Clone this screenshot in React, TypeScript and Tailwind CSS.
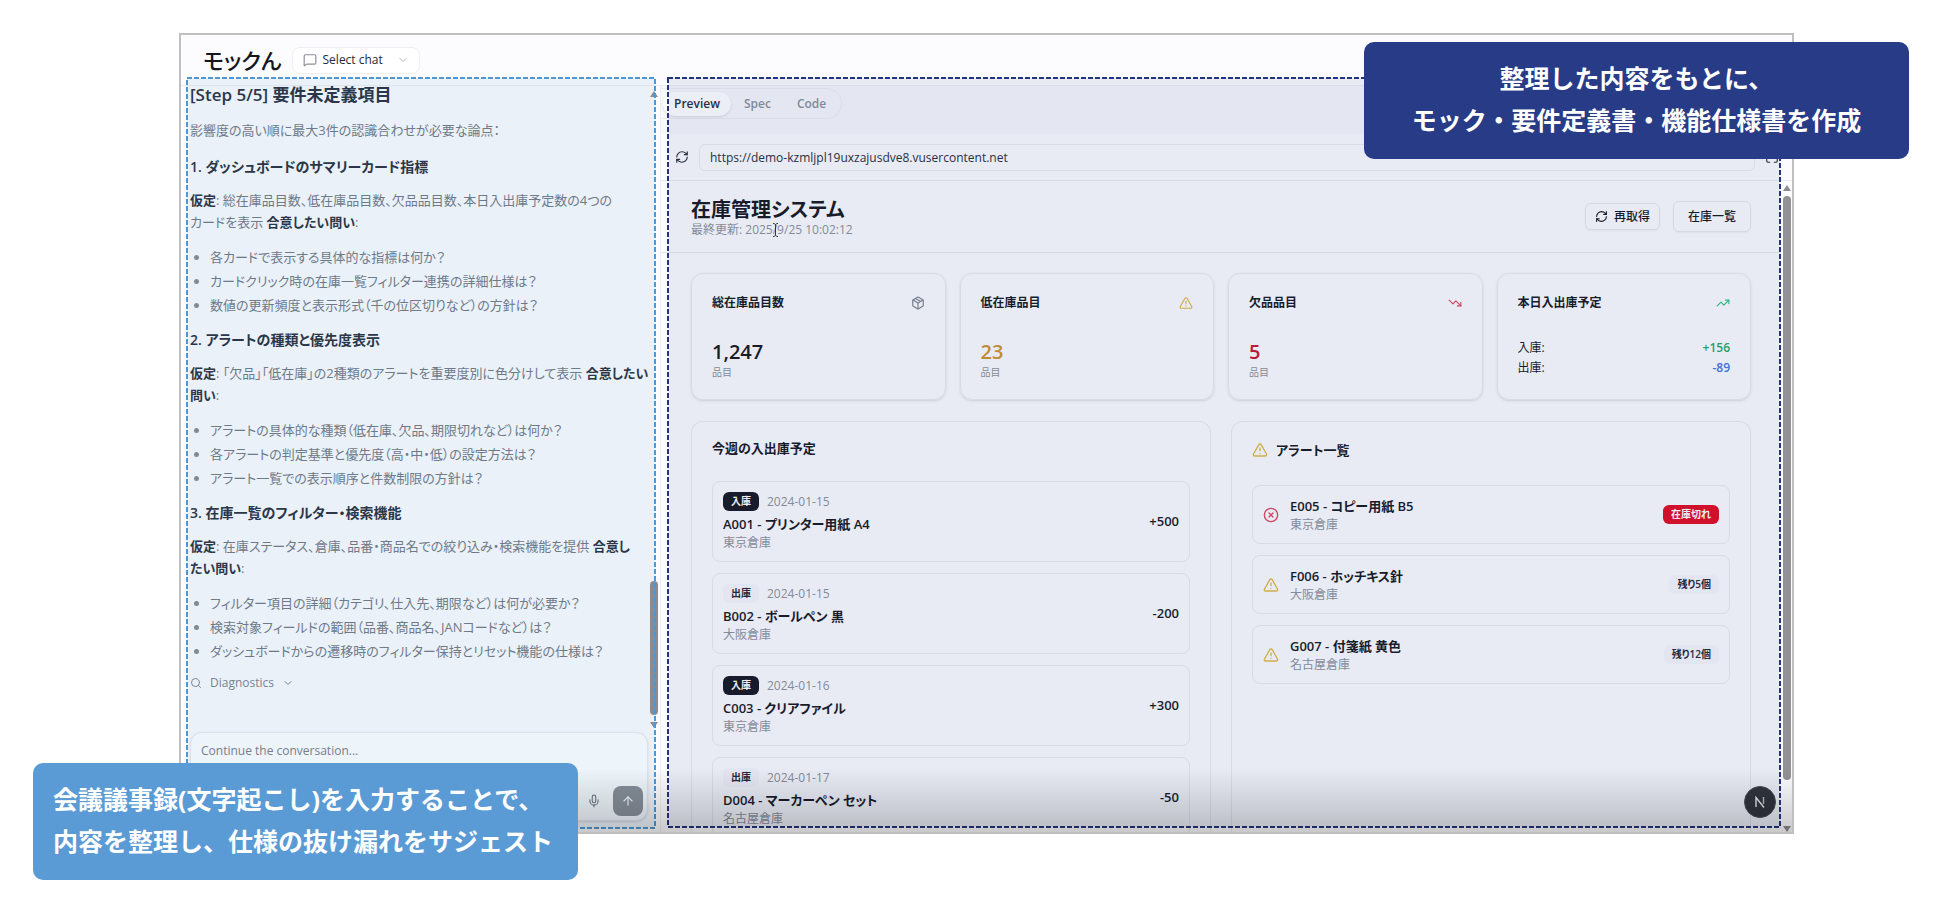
import React, { useState } from 'react';
import {
  ArrowUp,
  ChevronDown,
  CircleX,
  Maximize,
  MessageSquare,
  Mic,
  Package,
  RefreshCw,
  Search,
  TrendingDown,
  TrendingUp,
  TriangleAlert,
} from 'lucide-react';

interface Topic {
  title: string;
  assumption: React.ReactNode;
  agree: React.ReactNode;
  questions: string[];
}

const topics: Topic[] = [
  {
    title: '1. ダッシュボードのサマリーカード指標',
    assumption: (
      <>
        総在庫品目数、低在庫品目数、欠品品目数、本日入出庫予定数の4つの
        <br />
        カードを表示
      </>
    ),
    agree: '合意したい問い',
    questions: [
      '各カードで表示する具体的な指標は何か？',
      'カードクリック時の在庫一覧フィルター連携の詳細仕様は？',
      '数値の更新頻度と表示形式（千の位区切りなど）の方針は？',
    ],
  },
  {
    title: '2. アラートの種類と優先度表示',
    assumption: '「欠品」「低在庫」の2種類のアラートを重要度別に色分けして表示',
    agree: (
      <>
        合意したい
        <br />
        問い
      </>
    ),
    questions: [
      'アラートの具体的な種類（低在庫、欠品、期限切れなど）は何か？',
      '各アラートの判定基準と優先度（高・中・低）の設定方法は？',
      'アラート一覧での表示順序と件数制限の方針は？',
    ],
  },
  {
    title: '3. 在庫一覧のフィルター・検索機能',
    assumption: '在庫ステータス、倉庫、品番・商品名での絞り込み・検索機能を提供',
    agree: (
      <>
        合意し
        <br />
        たい問い
      </>
    ),
    questions: [
      'フィルター項目の詳細（カテゴリ、仕入先、期限など）は何が必要か？',
      '検索対象フィールドの範囲（品番、商品名、JANコードなど）は？',
      'ダッシュボードからの遷移時のフィルター保持とリセット機能の仕様は？',
    ],
  },
];

const schedule = [
  { type: '入庫', date: '2024-01-15', name: 'A001 - プリンター用紙 A4', warehouse: '東京倉庫', qty: '+500' },
  { type: '出庫', date: '2024-01-15', name: 'B002 - ボールペン 黒', warehouse: '大阪倉庫', qty: '-200' },
  { type: '入庫', date: '2024-01-16', name: 'C003 - クリアファイル', warehouse: '東京倉庫', qty: '+300' },
  { type: '出庫', date: '2024-01-17', name: 'D004 - マーカーペン セット', warehouse: '名古屋倉庫', qty: '-50' },
];

const alerts = [
  { name: 'E005 - コピー用紙 B5', warehouse: '東京倉庫', status: '在庫切れ', out: true },
  { name: 'F006 - ホッチキス針', warehouse: '大阪倉庫', status: '残り5個', out: false },
  { name: 'G007 - 付箋紙 黄色', warehouse: '名古屋倉庫', status: '残り12個', out: false },
];

const tabs = ['Preview', 'Spec', 'Code'];

// Tinted area with a dashed outline that marks one half of the window
const Highlight: React.FC<{ className: string; stroke: string }> = ({ className, stroke }) => (
  <div className={`absolute pointer-events-none ${className}`}>
    <svg className="w-full h-full overflow-visible" aria-hidden="true">
      <rect width="100%" height="100%" fill="none" stroke={stroke} strokeWidth="2" strokeDasharray="5 2" />
    </svg>
  </div>
);

const Triangle: React.FC<{ down?: boolean }> = ({ down }) => (
  <svg viewBox="0 0 8 6" className="w-2 h-[6px] fill-[#8c8c8f]" aria-hidden="true">
    <path d={down ? 'M0 0h8L4 6z' : 'M0 6h8L4 0z'} />
  </svg>
);

const Badge: React.FC<{ className: string; children: React.ReactNode }> = ({ className, children }) => (
  <span className={`flex items-center h-[19px] px-2 rounded-md text-[10px] font-semibold ${className}`}>
    {children}
  </span>
);

const SummaryCard: React.FC<{ title: string; icon: React.ReactNode; children: React.ReactNode }> = ({
  title,
  icon,
  children,
}) => (
  <div className="border border-[#e9eaef] rounded-xl shadow-sm px-5 pt-[21px] pb-[19px]">
    <div className="flex items-center justify-between mb-[29px]">
      <h3 className="text-xs font-semibold">{title}</h3>
      {icon}
    </div>
    {children}
  </div>
);

const ChatPanel: React.FC = () => (
  <section className="relative w-[480px] shrink-0 flex flex-col pl-[9px] border-r border-[#efeff3]">
    <div className="flex-1 min-h-0 text-[13px] leading-[22px] text-[#71767f] whitespace-nowrap">
      <h2 className="text-[17px] leading-[18px] font-semibold text-[#262b38]">[Step 5/5] 要件未定義項目</h2>
      <p className="mt-[15px] mb-[14px]">影響度の高い順に最大3件の認識合わせが必要な論点：</p>
      {topics.map((topic) => (
        <div key={topic.title} className="mb-3">
          <h3 className="text-sm leading-6 font-semibold text-[#262b38]">{topic.title}</h3>
          <p className="mt-[10px] mb-[13px]">
            <strong className="font-semibold text-[#262b38]">仮定</strong>: {topic.assumption}{' '}
            <strong className="font-semibold text-[#262b38]">{topic.agree}</strong>:
          </p>
          <ul className="flex flex-col gap-[2px]">
            {topic.questions.map((q) => (
              <li key={q} className="flex items-center">
                <span className="w-[5px] h-[5px] ml-1 mr-[11px] rounded-full bg-[#858a93]" />
                {q}
              </li>
            ))}
          </ul>
        </div>
      ))}
      <button className="flex items-center gap-2 mt-[13px] text-xs text-[#7d828b]">
        <Search className="w-3 h-3" />
        Diagnostics
        <ChevronDown className="w-3 h-3" />
      </button>
    </div>

    <form className="h-[89px] mr-3 mb-[11px] border border-[#ebebf0] rounded-xl bg-white shadow-sm flex flex-col">
      <textarea
        aria-label="Message"
        placeholder="Continue the conversation..."
        className="flex-1 w-full resize-none outline-none px-[10px] pt-[10px] text-xs placeholder:text-[#777c86]"
      />
      <div className="flex items-center justify-end gap-3 pr-1 pb-1">
        <button type="button" aria-label="Voice input">
          <Mic className="w-[14px] h-[14px] text-[#777b82]" />
        </button>
        <button
          type="button"
          aria-label="Send"
          className="w-[30px] h-[30px] rounded-lg bg-[#8b8d92] text-white flex items-center justify-center"
        >
          <ArrowUp className="w-[14px] h-[14px]" />
        </button>
      </div>
    </form>

    <div className="absolute right-[2px] top-[5px] bottom-[104px] w-2 flex flex-col items-center">
      <Triangle />
      <div className="flex-1" />
      <div className="w-2 h-[134px] mb-[7px] rounded-full bg-[#8c8c8f]" />
      <Triangle down />
    </div>
    <Highlight className="left-[6px] right-[5px] -top-2 bottom-1 bg-[#5b9bd5]/11" stroke="#4f97d3" />
  </section>
);

const Dashboard: React.FC = () => (
  <div className="flex-1 min-w-0 flex flex-col text-[#15161c]">
    <header className="relative flex items-center justify-between h-[72px] shrink-0 px-[30px] border-b border-[#e6e7ec]">
      <div className="pt-[2px]">
        <h1 className="text-xl leading-6 font-semibold">在庫管理システム</h1>
        <p className="text-xs text-[#8d9199]">最終更新: 2025/9/25 10:02:12</p>
      </div>
      <svg viewBox="0 0 7 14" className="absolute left-[111px] top-[42px] w-[7px] h-[14px]" aria-hidden="true">
        <path d="M1 .5c1.500 0 2.500.5 2.500 1.500C3.500 1 4.500.5 6 .5M3.500 2v10M1 13.500c1.500 0 2.500-.5 2.500-1.500 0 1 1 1.500 2.500 1.500" fill="none" stroke="#33363f" />
      </svg>
      <div className="flex items-center gap-[13px] text-xs font-medium">
        <button className="flex items-center gap-[6px] h-[27px] px-[9px] border border-[#e6e7ec] rounded-md shadow-xs">
          <RefreshCw className="w-[13px] h-[13px]" />
          再取得
        </button>
        <button className="h-[31px] px-[14px] border border-[#e6e7ec] rounded-md shadow-xs">在庫一覧</button>
      </div>
    </header>

    <div className="flex-1 min-h-0 overflow-hidden flex flex-col px-[30px] pt-5">
      <div className="grid grid-cols-4 gap-[14px] shrink-0">
        <SummaryCard title="総在庫品目数" icon={<Package className="w-[14px] h-[14px] text-[#7c8089]" />}>
          <p className="text-xl leading-6 font-semibold">1,247</p>
          <p className="text-[10px] leading-4 text-[#8d9199]">品目</p>
        </SummaryCard>
        <SummaryCard title="低在庫品目" icon={<TriangleAlert className="w-[14px] h-[14px] text-[#e0b840]" />}>
          <p className="text-xl leading-6 font-semibold text-[#d1912a]">23</p>
          <p className="text-[10px] leading-4 text-[#8d9199]">品目</p>
        </SummaryCard>
        <SummaryCard title="欠品品目" icon={<TrendingDown className="w-[14px] h-[14px] text-[#e0445c]" />}>
          <p className="text-xl leading-6 font-semibold text-[#cf1330]">5</p>
          <p className="text-[10px] leading-4 text-[#8d9199]">品目</p>
        </SummaryCard>
        <SummaryCard title="本日入出庫予定" icon={<TrendingUp className="w-[14px] h-[14px] text-[#2fc183]" />}>
          <dl className="-mt-[2px] text-xs leading-5">
            <div className="flex justify-between">
              <dt>入庫:</dt>
              <dd className="font-semibold text-[#1fa866]">+156</dd>
            </div>
            <div className="flex justify-between">
              <dt>出庫:</dt>
              <dd className="font-semibold text-[#3b74e0]">-89</dd>
            </div>
          </dl>
        </SummaryCard>
      </div>

      <div className="grid grid-cols-2 gap-5 mt-[21px] flex-1 min-h-0">
        <section className="border border-b-0 border-[#e9eaef] rounded-t-xl px-5 pt-[19px]">
          <h2 className="text-[13px] leading-[14px] font-semibold mb-[26px]">今週の入出庫予定</h2>
          <ul className="flex flex-col gap-[11px]">
            {schedule.map((item) => (
              <li
                key={item.name}
                className="flex items-center justify-between p-[10px] border border-[#e9eaef] rounded-lg"
              >
                <div>
                  <div className="flex items-center gap-2 mb-[3px]">
                    <Badge className={item.type === '入庫' ? 'bg-[#14151f] text-white' : 'bg-[#f7f7fb] text-[#1f2430]'}>
                      {item.type}
                    </Badge>
                    <span className="text-xs text-[#8d9199]">{item.date}</span>
                  </div>
                  <p className="text-[13px] leading-5 font-semibold">{item.name}</p>
                  <p className="text-xs leading-[17px] text-[#8d9199]">{item.warehouse}</p>
                </div>
                <span className="text-[13px] font-semibold">{item.qty}</span>
              </li>
            ))}
          </ul>
        </section>

        <section className="border border-b-0 border-[#e9eaef] rounded-t-xl px-5 pt-[19px]">
          <h2 className="flex items-center gap-2 text-[13px] leading-[18px] font-semibold mb-[26px]">
            <TriangleAlert className="w-4 h-4 text-[#e0b840]" />
            アラート一覧
          </h2>
          <ul className="flex flex-col gap-[11px]">
            {alerts.map((item) => (
              <li key={item.name} className="flex items-center p-[10px] border border-[#e9eaef] rounded-lg">
                {item.out ? (
                  <CircleX className="w-4 h-4 mr-[11px] text-[#e0445c]" />
                ) : (
                  <TriangleAlert className="w-4 h-4 mr-[11px] text-[#e0b840]" />
                )}
                <div className="flex-1">
                  <p className="text-[13px] leading-5 font-semibold">{item.name}</p>
                  <p className="text-xs leading-[17px] text-[#8d9199]">{item.warehouse}</p>
                </div>
                <Badge className={item.out ? 'bg-[#e0091f] text-white' : 'bg-[#f7f7fb] text-[#1f2430]'}>
                  {item.status}
                </Badge>
              </li>
            ))}
          </ul>
        </section>
      </div>
    </div>
  </div>
);

const PreviewPanel: React.FC = () => {
  const [tab, setTab] = useState('Preview');

  return (
    <section className="relative flex-1 min-w-0 flex flex-col">
      <div className="h-12 shrink-0 pt-[2px] bg-[#f8f8fc]">
        <div className="inline-flex items-center h-[31px] pl-[2px] pr-[2px] border border-l-0 border-[#eeeef3] rounded-r-full bg-[#f8f8fb]">
          {tabs.map((name) => (
            <button
              key={name}
              onClick={() => setTab(name)}
              className={
                tab === name
                  ? 'h-6 px-[11px] rounded-full bg-white shadow-sm text-xs font-semibold text-[#262b38]'
                  : 'h-6 px-[13px] rounded-full text-xs font-semibold text-[#8b8f99]'
              }
            >
              {name}
            </button>
          ))}
        </div>
      </div>
      <div className="flex items-center h-[47px] shrink-0 pl-[14px] pr-1 border-b border-[#e9eaef]">
        <button aria-label="Reload" className="mr-[10px]">
          <RefreshCw className="w-[14px] h-[14px] text-[#262b38]" />
        </button>
        <input
          aria-label="URL"
          defaultValue="https://demo-kzmljpl19uxzajusdve8.vusercontent.net"
          className="flex-1 h-[27px] px-[10px] border border-[#e9eaef] rounded-md text-xs text-[#262b38] outline-none"
        />
        <button aria-label="Full screen" className="ml-[10px] mr-[9px]">
          <Maximize className="w-[14px] h-[14px] text-[#262b38]" />
        </button>
      </div>
      <div className="flex-1 min-h-0 flex">
        <Dashboard />
        <div className="w-[11px] shrink-0 flex flex-col items-center pt-1">
          <Triangle />
          <div className="w-2 flex-1 mt-[5px] mb-[46px] rounded-full bg-[#939396]" />
          <Triangle down />
        </div>
      </div>
      <Highlight className="left-[7px] right-3 -top-2 bottom-[5px] bg-[#3855a0]/10" stroke="#22347f" />
      <button
        aria-label="Next.js dev tools"
        className="absolute right-4 bottom-[14px] w-8 h-8 rounded-full bg-[#30343e] border border-[#4a4e58] flex items-center justify-center"
      >
        <svg viewBox="0 0 12 12" className="w-3 h-3" fill="none" aria-hidden="true">
          <path d="M2 11V1.500L10 11.500" stroke="#e6e6ea" strokeWidth="1.400" />
          <path d="M9.500 1v7" stroke="#b9bac0" strokeWidth="1.400" />
        </svg>
      </button>
    </section>
  );
};

const App: React.FC = () => {
  return (
    <div className="relative h-screen min-h-[600px] overflow-hidden bg-white flex pt-[33px] pb-[76px] pl-[179px] pr-[156px] font-['Open_Sans','Noto_Sans_CJK_JP',sans-serif]">
      <div className="relative flex-1 min-w-0 flex flex-col border-2 border-[#bfbfbf] bg-[#fcfcfe] overflow-hidden [font-feature-settings:'palt']">
        <header className="h-[51px] shrink-0 flex items-center pl-[22px] border-b border-[#ededf1]">
          <div className="text-[22px] leading-8 font-medium text-[#14151f]">モックん</div>
          <button className="flex items-center h-[27px] ml-[10px] px-[10px] border border-[#efeff3] rounded-lg bg-white text-xs text-[#262b38]">
            <MessageSquare className="w-[14px] h-[14px] mr-[6px] text-[#8b8f99]" />
            Select chat
            <ChevronDown className="w-3 h-3 ml-[14px] text-[#b4b7be]" />
          </button>
        </header>
        <div className="flex-1 min-h-0 flex">
          <ChatPanel />
          <PreviewPanel />
        </div>
        <div className="absolute inset-x-0 bottom-0 h-16 pointer-events-none bg-linear-to-b from-black/0 to-black/20" />
      </div>

      <p className="absolute right-[41px] top-[42px] w-[545px] pt-[15px] pb-[18px] rounded-[10px] bg-[#283b87] text-center text-[25px] leading-[42px] font-bold text-white">
        整理した内容をもとに、
        <br />
        モック・要件定義書・機能仕様書を作成
      </p>
      <p className="absolute left-[33px] bottom-[30px] w-[545px] pt-[15px] pb-[18px] pl-5 rounded-[10px] bg-[#5b9bd5] text-[25px] leading-[42px] font-bold text-white">
        会議議事録(文字起こし)を入力することで、
        <br />
        内容を整理し、仕様の抜け漏れをサジェスト
      </p>
    </div>
  );
};

export default App;
